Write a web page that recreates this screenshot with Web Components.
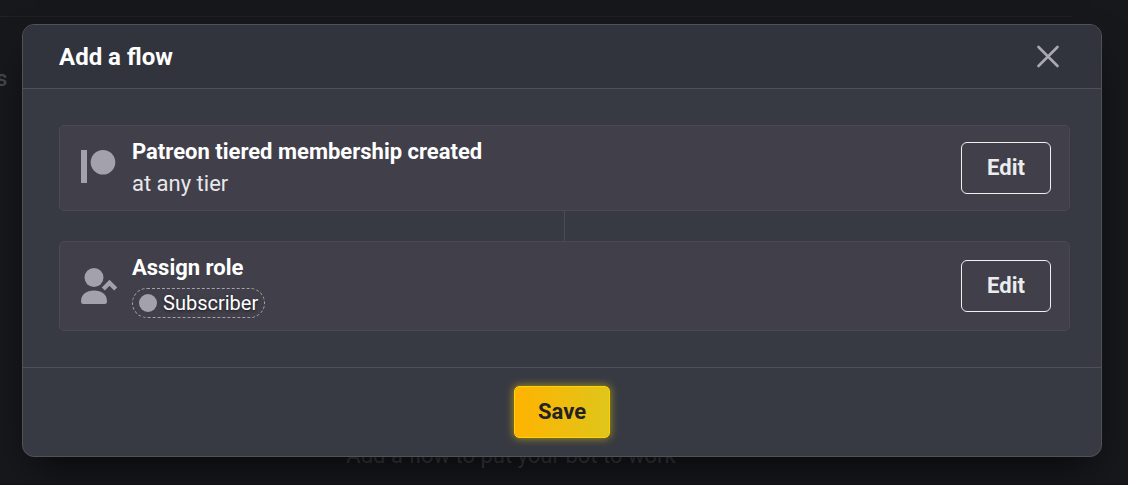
<!DOCTYPE html>
<html lang="en">
<head>
<meta charset="utf-8">
<title>Add a flow</title>
<style>
  html, body {
    height: 100%;
  }
  body {
    margin: 0;
    background: #17181c;
    color: #fff;
    font-family: Roboto, "Liberation Sans", sans-serif;
    font-size: 22px;
    line-height: 32px;
    overflow: hidden;
  }
</style>
</head>
<body>
<app-stage>
  <page-backdrop slot="page">
    <span slot="nav">s</span>
    <span slot="empty">Add a flow to put your bot to work</span>
  </page-backdrop>
  <flow-modal heading="Add a flow">
    <flow-step heading="Patreon tiered membership created">
      <svg slot="icon" width="36" height="36" viewBox="0 0 36 36" fill="#a3a2ac">
        <rect x="0" y="0" width="6" height="33"/>
        <circle cx="22" cy="12.300" r="12.300"/>
      </svg>
      at any tier
    </flow-step>
    <flow-step heading="Assign role">
      <svg slot="icon" width="36" height="36" viewBox="0 0 36 36" fill="#a3a2ac">
        <circle cx="13" cy="9.500" r="9.500"/>
        <path d="M0 33.500C0 26.500 5 22.500 13 22.500S26 26.500 26 33.500Q26 36 23.500 36H2.500Q0 36 0 33.500Z"/>
        <path d="M22.300 21L28.500 14.800L34.700 21" fill="none" stroke="#a3a2ac" stroke-width="4.400"/>
      </svg>
      <role-pill>Subscriber</role-pill>
    </flow-step>
    <save-button slot="footer">Save</save-button>
  </flow-modal>
</app-stage>

<script>
class AppStage extends HTMLElement {
  constructor() {
    super();
    this.attachShadow({ mode: "open" }).innerHTML = `
      <style>
        :host {
          display: grid;
          height: 100%;
        }
        /* the page and the dialog share one cell, dialog on top */
        .page, .overlay {
          grid-area: 1 / 1;
          min-width: 0;
        }
        .overlay {
          padding: 24px 26px 28px 22px;
          z-index: 1;
        }
      </style>
      <div class="page"><slot name="page"></slot></div>
      <div class="overlay"><slot></slot></div>
    `;
  }
}
customElements.define("app-stage", AppStage);

class PageBackdrop extends HTMLElement {
  constructor() {
    super();
    this.attachShadow({ mode: "open" }).innerHTML = `
      <style>
        :host {
          display: flex;
          flex-direction: column;
          box-sizing: border-box;
          height: 100%;
          padding-top: 16px;
          border-bottom: 1px solid #17101a;
        }
        .rule {
          margin-right: 56px;
          border-top: 1px solid #202125;
        }
        .nav {
          margin-top: 46px;
          margin-left: -4px;
          color: #46474b;
          font-weight: 500;
        }
        .empty {
          margin-top: auto;
          margin-bottom: 12px;
          padding-right: 106px;
          text-align: center;
          color: #3c3d42;
        }
      </style>
      <div class="rule"></div>
      <div class="nav"><slot name="nav"></slot></div>
      <div class="empty"><slot name="empty"></slot></div>
    `;
  }
}
customElements.define("page-backdrop", PageBackdrop);

class FlowModal extends HTMLElement {
  constructor() {
    super();
    this.attachShadow({ mode: "open" }).innerHTML = `
      <style>
        :host {
          display: block;
          border: 1px solid #50515a;
          border-radius: 12px;
          background: #383a43;
          box-shadow: 0 20px 40px -12px rgba(0, 0, 0, 0.7);
          overflow: hidden;
        }
        header {
          display: flex;
          align-items: center;
          justify-content: space-between;
          padding: 16px 41px 15px 36px;
          border-bottom: 1px solid #4f505a;
          background: #32343d;
        }
        h2 {
          margin: 0;
          font-size: 24px;
          font-weight: 700;
          line-height: 32px;
        }
        .close {
          display: flex;
          padding: 0;
          border: 0;
          background: none;
          cursor: pointer;
        }
        .steps {
          display: flex;
          flex-direction: column;
          gap: 30px;
          padding: 36px 31px 36px 36px;
          background: linear-gradient(#4a4b56, #4a4b56) center / 1px 100% no-repeat content-box;
        }
        footer {
          display: flex;
          justify-content: center;
          padding: 18px 0;
          border-top: 1px solid #4f505a;
        }
      </style>
      <div role="dialog" aria-labelledby="title">
        <header>
          <h2 id="title"></h2>
          <button class="close" type="button" aria-label="Close">
            <svg width="24" height="24" viewBox="0 0 24 24" fill="none" stroke="#a9a8b4" stroke-width="2.600" stroke-linecap="round">
              <path d="M2.500 2L21.500 21M21.500 2L2.500 21"/>
            </svg>
          </button>
        </header>
        <div class="steps"><slot></slot></div>
        <footer><slot name="footer"></slot></footer>
      </div>
    `;
  }

  connectedCallback() {
    this.shadowRoot.getElementById("title").textContent = this.getAttribute("heading");
  }
}
customElements.define("flow-modal", FlowModal);

class FlowStep extends HTMLElement {
  constructor() {
    super();
    this.attachShadow({ mode: "open" }).innerHTML = `
      <style>
        :host {
          display: flex;
          align-items: center;
          gap: 15px;
          padding: 10px 18px 10px 21px;
          border: 1px solid #4a4954;
          border-radius: 5px;
          background: #403f4a;
        }
        .icon {
          display: flex;
          width: 36px;
        }
        .text {
          flex: 1;
          min-width: 0;
        }
        h3 {
          margin: 0;
          font-size: 22px;
          font-weight: 700;
          line-height: 32px;
        }
        .detail {
          color: #e8e8ea;
        }
        button {
          box-sizing: border-box;
          min-width: 90px;
          height: 52px;
          border: 1px solid #f0f0f1;
          border-radius: 6px;
          background: none;
          color: #ececee;
          font: 700 22px/32px Roboto, "Liberation Sans", sans-serif;
          cursor: pointer;
        }
      </style>
      <div class="icon"><slot name="icon"></slot></div>
      <div class="text">
        <h3></h3>
        <div class="detail"><slot></slot></div>
      </div>
      <button type="button">Edit</button>
    `;
  }

  connectedCallback() {
    this.shadowRoot.querySelector("h3").textContent = this.getAttribute("heading");
  }
}
customElements.define("flow-step", FlowStep);

class RolePill extends HTMLElement {
  constructor() {
    super();
    this.attachShadow({ mode: "open" }).innerHTML = `
      <style>
        :host {
          display: flex;
          align-items: center;
          gap: 6px;
          box-sizing: border-box;
          width: fit-content;
          height: 30px;
          margin: 4px 0 2px;
          padding: 0 6px;
          border: 1px dashed #a3a2ac;
          border-radius: 15px;
          color: #fff;
          font-size: 20px;
          text-shadow: 0 1px 3px rgba(0, 0, 0, 0.6);
        }
        .dot {
          width: 18px;
          height: 18px;
          border-radius: 50%;
          background: #a3a2ac;
        }
      </style>
      <span class="dot"></span>
      <slot></slot>
    `;
  }
}
customElements.define("role-pill", RolePill);

class SaveButton extends HTMLElement {
  constructor() {
    super();
    this.attachShadow({ mode: "open" }).innerHTML = `
      <style>
        :host {
          display: block;
        }
        button {
          box-sizing: border-box;
          min-width: 96px;
          height: 52px;
          border: 1px solid #ffd200;
          border-radius: 5px;
          background: linear-gradient(90deg, #ffb300, #e0c51b);
          box-shadow: 0 0 8px rgba(255, 220, 0, 0.6);
          color: #222226;
          font: 700 22px/32px Roboto, "Liberation Sans", sans-serif;
          cursor: pointer;
        }
      </style>
      <button type="button"><slot></slot></button>
    `;
  }
}
customElements.define("save-button", SaveButton);
</script>
</body>
</html>
